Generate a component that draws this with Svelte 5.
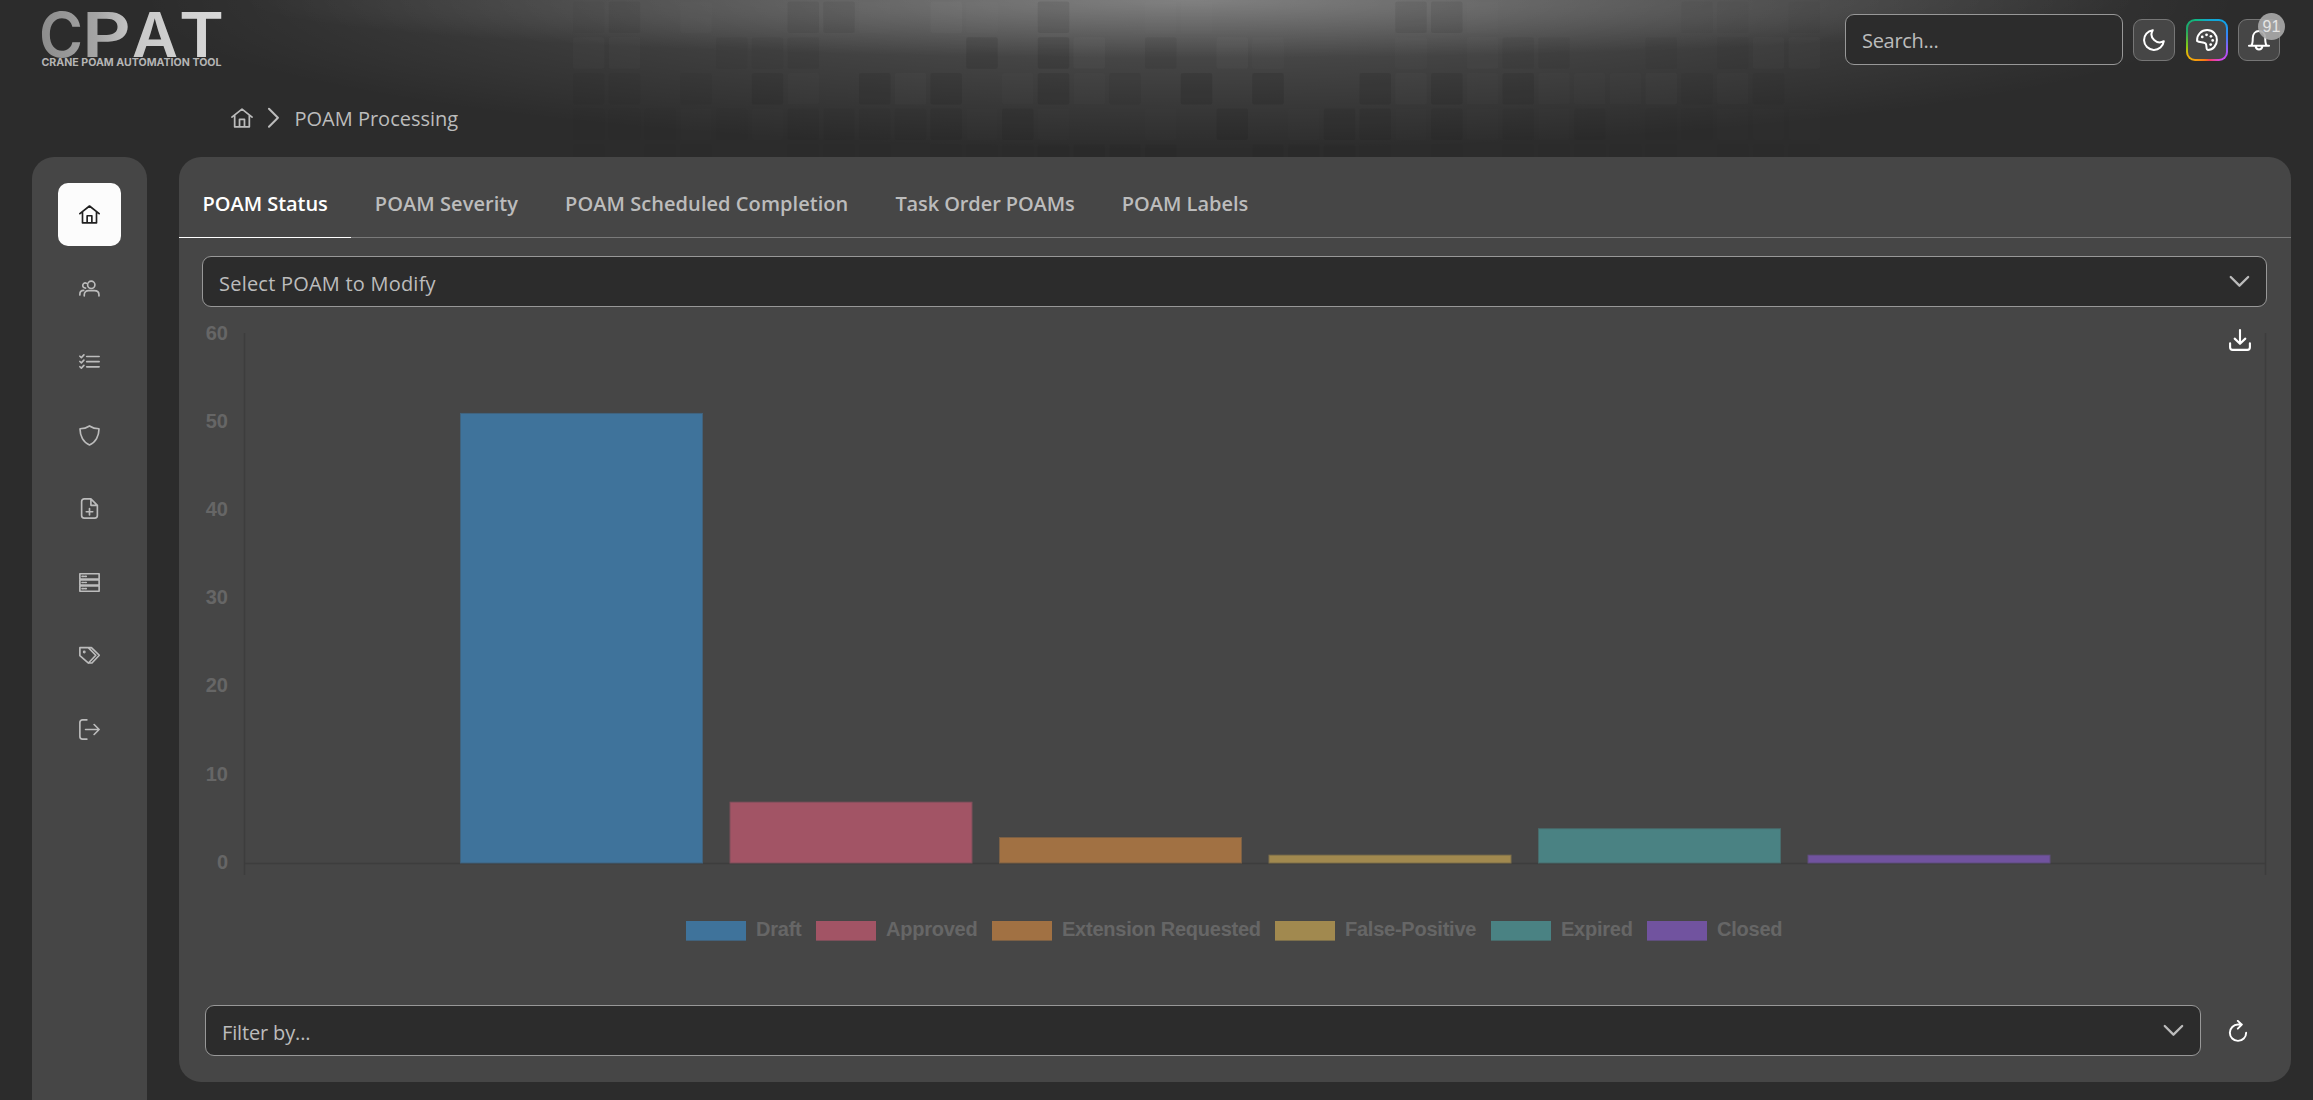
<script>
  const nav = ['home', 'users', 'list', 'shield', 'file', 'server', 'tags', 'signout'];

  const tabs = [
    { label: 'POAM Status', cls: 'snug' },
    { label: 'POAM Severity', cls: 'wide' },
    { label: 'POAM Scheduled Completion', cls: 'loose' },
    { label: 'Task Order POAMs', cls: 'tight' },
    { label: 'POAM Labels', cls: '' }
  ];

  const series = [
    { name: 'Draft', value: 51, color: '#3f739b', edge: '#41627c', key: 484 },
    { name: 'Approved', value: 7, color: '#a25465', edge: '#7d4f5a', key: 614 },
    { name: 'Extension Requested', value: 3, color: '#a17143', edge: '#7b6045', key: 790 },
    { name: 'False-Positive', value: 1, color: '#a1894f', edge: '#7c6f4b', key: 1073 },
    { name: 'Expired', value: 4, color: '#4a8283', edge: '#486b6b', key: 1289 },
    { name: 'Closed', value: 1, color: '#71539f', edge: '#5f4e7d', key: 1445 }
  ];
  const ticks = [0, 10, 20, 30, 40, 50, 60];
  const y = (v) => 556.5 - v * 8.835;

  // Backdrop tiles: D/d darken, L/l lighten, . leaves the glow untouched.
  const rows = [
    'dD.l..DDl.Ll.D..ll.....DDl.....dd.d',
    'll..ddd....D.DL.d.Ll...l.ldd..d.dll',
    'dd.d.Dl.DLD.lDld.D.D..DLDlDlllLdld.',
    'dddldlddddDlDl..l.D.lDDlDldld.ddlll',
    'dlddnldddlddddddd.lddddldlddddd.ddd'
  ];
  // The glow thins out downwards and sideways, and the dark tiles with it.
  const dim = [0.09, 0.11, 0.1, 0.07, 0.05];
  const lift = [0.022, 0.024, 0.02, 0.012, 0.008];
  const cells = rows.flatMap((row, r) =>
    [...row].flatMap((c, k) => {
      const reach = 1 - Math.abs(k - 17) / 30;
      const tile = { x: 573 + k * 35.75, y: 1.5 + r * 35.7 };
      if (c === 'D') return [{ ...tile, fill: '#000', o: dim[r] * reach }];
      if (c === 'd') return [{ ...tile, fill: '#000', o: dim[r] * reach * 0.5 }];
      if (c === 'L') return [{ ...tile, fill: '#fff', o: lift[r] }];
      if (c === 'l') return [{ ...tile, fill: '#fff', o: lift[r] * 0.6 }];
      return [];
    })
  );
</script>

{#snippet icon(name)}
  <svg class="icon {name}" viewBox="0 0 24 24" aria-hidden="true">
    {#if name === 'home'}
      <path d="M1 11 12 2.300 23 11M4 9v12.600h16V9M9.300 21.600v-8.200h5.400v8.200" />
    {:else if name === 'users'}
      <circle cx="14" cy="7.800" r="4.200" />
      <path d="M6 20.600v-1.400c0-3 2.200-4.800 5-4.800h6.500c3 0 5.300 1.900 5.300 4.800v1.400M8.400 5.900C6.200 5 4.300 6.600 4.300 8.600c0 1.900 1.500 3 3.200 2.900M1 19.500v-1c0-2.800 1.700-4.300 4.400-4.300" />
    {:else if name === 'list'}
      <path d="M8.800 6.300H23M8.800 12.200H23M8.800 18.100H23M1 6l1.700 1.500L5.600 4.400M1 12l1.700 1.500 2.900-3.100M1 18l1.700 1.500 2.900-3.100" />
    {:else if name === 'shield'}
      <path d="M12 1.100C9 3.200 5 4.300 1.200 4.300 1 12.500 5 20 12 22.900 19 20 23 12.500 22.800 4.300 19 4.300 15 3.200 12 1.100Z" />
    {:else if name === 'file'}
      <path d="M13.600 1H6a3 3 0 0 0-3 3v16a3 3 0 0 0 3 3h12a3 3 0 0 0 3-3V8.400L13.600 1v7.400H21M12 12v7.400M8.300 15.700h7.400" />
    {:else if name === 'server'}
      <path d="M1 2h22v6H1zM1 9h22v6H1zM1 16h22v6H1zM3.500 5h1.600M6.700 5h1.600M3.500 12h1.600M6.700 12h1.600M3.500 19h1.600M6.700 19h1.600" />
    {:else if name === 'tags'}
      <path d="M1 3h9.600l8.600 8.700-8.400 8.900L1 12.200ZM10.600 3h3.600l9 8.700-8.400 8.900h-3.600" />
      <circle cx="6" cy="8" r=".7" />
    {:else if name === 'signout'}
      <path d="M9 1H4a3 3 0 0 0-3 3v16a3 3 0 0 0 3 3h5M7.500 12H23M17.300 6.300 23 12l-5.700 5.700" />
    {:else if name === 'moon'}
      <path d="M10.600 1.300A10.800 10.800 0 1 0 22.700 13.300C15.500 17.600 5.800 9.500 10.600 1.300Z" />
    {:else if name === 'palette'}
      <path d="M1.200 13C.8 6 6 1.200 12.200 1.200 18.500 1.200 22.800 6 22.800 12c0 6-4.300 10.800-9.800 10.800-2.300 0-1-4.300-2.300-6.600C9 13.300 3.800 15.300 1.200 13Z" />
      <g class="dots"><circle cx="6.800" cy="8.600" r="1.500" /><circle cx="11.500" cy="6.300" r="1.500" /><circle cx="16.300" cy="8" r="1.500" /><circle cx="18.200" cy="12.500" r="1.500" /><circle cx="16" cy="17" r="1.500" /></g>
    {:else if name === 'bell'}
      <path d="M1 18.200h22M3.600 18c1.600-2 1.600-4.500 1.600-8C5.200 5.500 8 2.200 12 2.200s6.800 3.300 6.800 7.800c0 3.500 0 6 1.600 8M8.300 18.800c.4 2.300 1.800 3.500 3.700 3.500s3.300-1.200 3.700-3.500" />
    {:else if name === 'right'}
      <path d="m6.500 2 9.800 9.700L6.500 21.500" />
    {:else if name === 'down'}
      <path d="m3 6.500 9.500 9.500L22 6.500" />
    {:else if name === 'export'}
      <path d="M12 1.200v14.600M6.200 10.500l5.800 5.700 5.800-5.700M1.200 15.500V20a2.800 2.800 0 0 0 2.800 2.800h16a2.800 2.800 0 0 0 2.800-2.800v-4.500" />
    {:else if name === 'refresh'}
      <path d="M16.200 5H12a8.900 8.900 0 1 0 8.900 8.900M11.800 1l4.400 4.100-4.400 4.300" />
    {/if}
  </svg>
{/snippet}

<div class="app">
  <svg class="backdrop" viewBox="0 0 2313 157" aria-hidden="true">
    {#each cells as c}
      <rect x={c.x} y={c.y} width="31.500" height="31.500" rx="2" fill={c.fill} fill-opacity={c.o} />
    {/each}
  </svg>

  <div class="shell">
    <header>
      <svg class="logo" viewBox="0 0 184 60" role="img" aria-label="CPAT">
        <defs>
          <linearGradient id="metal" gradientUnits="userSpaceOnUse" x1="0" y1="0" x2="182" y2="0">
            <stop offset="0" stop-color="#8c8c8c" />
            <stop offset=".3" stop-color="#a5a5a5" />
            <stop offset=".5" stop-color="#c8c8c8" />
            <stop offset="1" stop-color="#d8d8d8" />
          </linearGradient>
        </defs>
        <g class="mark" fill="url(#metal)">
          <text x="-3" y="46.500" textLength="44" lengthAdjust="spacingAndGlyphs">C</text>
          <text x="40" y="46.500" textLength="49" lengthAdjust="spacingAndGlyphs">P</text>
          <text x="90" y="46.500" textLength="46" lengthAdjust="spacingAndGlyphs">A</text>
          <text x="137" y="46.500" textLength="45" lengthAdjust="spacingAndGlyphs">T</text>
        </g>
        <text class="tagline" x="-0.500" y="55.500" textLength="180" lengthAdjust="spacingAndGlyphs">CRANE POAM AUTOMATION TOOL</text>
      </svg>
      <div class="actions">
        <div class="search">Search...</div>
        <button aria-label="Dark mode">{@render icon('moon')}</button>
        <button class="rainbow" aria-label="Theme">{@render icon('palette')}</button>
        <button aria-label="Notifications">{@render icon('bell')}<span class="badge">91</span></button>
      </div>
    </header>

    <nav class="crumbs">
      {@render icon('home')}
      {@render icon('right')}
      <span>POAM Processing</span>
    </nav>

    <div class="body">
      <aside>
        {#each nav as item, i}
          <div class="item" class:active={i === 0}>{@render icon(item)}</div>
        {/each}
      </aside>

      <main>
        <div class="tabs">
          {#each tabs as t, i}
            <div class="tab {t.cls}" class:active={i === 0}>{t.label}</div>
          {/each}
        </div>
        <div class="select top"><span>Select POAM to Modify</span>{@render icon('down')}</div>
        <div class="chart">
          <svg class="plot" viewBox="0 0 2065 698">
            <g class="axis">
              <path d="M42.500 26v542M2063.500 26v542" />
              <path d="M42.500 556.500h2021" />
            </g>
            {#each ticks as v}
              <text class="lbl tick" x="26" y={y(v) + 5.3 + v / 60} text-anchor="end">{v}</text>
            {/each}
            {#each series as s, i}
              <rect x={258 + i * 269.5} y={y(s.value)} width="243" height={556.5 - y(s.value)} fill={s.edge} />
              <rect x={259 + i * 269.5} y={y(s.value) + 1} width="241" height={554.5 - y(s.value)} fill={s.color} />
              <rect x={s.key} y="614" width="60" height="20" fill={s.edge} />
              <rect x={s.key} y="614" width="60" height="19" fill={s.color} />
              <text class="lbl" x={s.key + 70} y="629">{s.name}</text>
            {/each}
          </svg>
          <div class="download">{@render icon('export')}</div>
        </div>
        <div class="filter">
          <div class="select"><span>Filter by...</span>{@render icon('down')}</div>
          {@render icon('refresh')}
        </div>
      </main>
    </div>
  </div>
</div>

<style>
  :global(body) { background: #2c2c2c; overflow: hidden; }
  .app {
    display: grid;
    height: 1100px;
    overflow: hidden;
    color: #bcbcbc;
    font: 400 20px/1.3 'Open Sans', 'Noto Sans', sans-serif;
    background:
      radial-gradient(ellipse 950px 58px at 1190px 0, rgba(255, 255, 255, 0.25), transparent),
      radial-gradient(ellipse 1050px 150px at 1190px 0, rgba(255, 255, 255, 0.2), transparent),
      #2c2c2c;
  }
  .backdrop, .shell { grid-area: 1 / 1; min-width: 0; }
  .backdrop { width: 2313px; height: 157px; }
  .shell { display: flex; flex-direction: column; height: 1100px; }

  .icon {
    display: block;
    flex: none;
    width: 22px;
    height: 22px;
    fill: none;
    stroke: currentColor;
    stroke-width: 1.9;
    stroke-linecap: round;
    stroke-linejoin: round;
  }
  .dots { fill: currentColor; stroke: none; }
  .icon.down { stroke-width: 2.5; }

  header { display: flex; justify-content: space-between; height: 79px; padding: 10px 33px 0 42px; box-sizing: border-box; }
  .logo { width: 184px; height: 60px; overflow: visible; }
  .mark { font: 600 62px Inter, sans-serif; }
  .tagline { font: 700 10.5px Inter, sans-serif; fill: #b5b5b5; }
  .actions { display: flex; align-items: center; height: 60px; gap: 10px; }
  .search {
    box-sizing: border-box;
    width: 278px;
    height: 51px;
    margin-top: -1px;
    padding: 13px 16px;
    border: 1px solid #989898;
    border-radius: 9px;
    background: #2c2c2c;
    letter-spacing: -0.3px;
  }
  button {
    position: relative;
    display: grid;
    place-items: center;
    width: 42px;
    height: 42px;
    padding: 0;
    border: 1px solid #767676;
    border-radius: 9px;
    background: #464646;
    color: #fff;
  }
  button .icon { stroke-width: 2.2; }
  .rainbow {
    margin-left: 1px;
    border: 2px solid transparent;
    background:
      linear-gradient(#464646, #464646) padding-box,
      conic-gradient(from 0deg, #14a8c8, #0ea5e9 12%, #3b82f6 22%, #a855f7 34%, #d946ef 40%, #f43f5e 48%, #f97316 51%, #f5a80b 60%, #eab308 65%, #84cc16 70%, #22a565 82%, #10b981 92%, #14a8c8) border-box;
  }
  .badge {
    position: absolute;
    top: -7px;
    right: -6px;
    width: 27px;
    height: 27px;
    border-radius: 50%;
    background: rgba(170, 170, 170, 0.9);
    color: #e4e4e4;
    font-size: 16px;
    line-height: 28px;
  }

  .crumbs { display: flex; align-items: center; height: 78px; padding: 0 0 0 230.5px; box-sizing: border-box; }
  .crumbs span { padding-top: 1px; }
  .crumbs .right { margin: 0 9.5px 0 10.5px; stroke-width: 2.2; }

  .body { display: flex; flex: 1; min-height: 0; gap: 32px; padding: 0 22px 0 32px; }
  aside {
    display: flex;
    flex-direction: column;
    align-items: center;
    gap: 10.5px;
    box-sizing: border-box;
    width: 115px;
    padding-top: 26px;
    border-radius: 22px 22px 0 0;
    background: #464646;
  }
  .item { display: grid; place-items: center; width: 63px; height: 63px; border-radius: 10px; }
  .item .icon { width: 21px; height: 21px; }
  .item.active { background: #fcfcfc; color: #202020; }

  main { display: flex; flex: 1; flex-direction: column; height: 925px; border-radius: 22px; background: #464646; }
  .tabs { display: flex; box-sizing: border-box; height: 81px; border-bottom: 1px solid #7a7a7a; font-weight: 600; }
  .tab { height: 80px; padding: 0 23.5px; line-height: 93px; white-space: nowrap; }
  .tab.active { border-bottom: 1px solid #fff; color: #fff; }
  .snug { letter-spacing: -0.04px; }
  .wide { letter-spacing: 0.06px; }
  .loose { letter-spacing: 0.06px; }
  .tight { letter-spacing: -0.1px; }

  .select {
    display: flex;
    align-items: center;
    justify-content: space-between;
    box-sizing: border-box;
    height: 51px;
    padding: 0 16px;
    border: 1px solid #989898;
    border-radius: 9px;
    background: #2c2c2c;
  }
  .select span { padding-top: 4px; }
  .select.top { margin: 18px 24px 0 23px; letter-spacing: 0.22px; }
  .chart { position: relative; height: 698px; margin: 0 24px 0 23px; }
  .plot { display: block; width: 2065px; height: 698px; }
  .axis { fill: none; stroke: #3d3d3d; stroke-width: 1.5; }
  .lbl { font: 700 20px 'Liberation Sans', Arial, sans-serif; letter-spacing: -0.24px; fill: #666; }
  .tick { letter-spacing: 0; }
  .download { position: absolute; top: 22px; right: 16px; color: #fff; }
  .download .icon { stroke-width: 2.3; }
  .filter { display: flex; align-items: center; gap: 26px; padding: 0 42px 0 26px; }
  .filter .select { flex: 1; letter-spacing: -0.15px; }
  .filter > .icon { color: #fff; stroke-width: 2.1; }
</style>
